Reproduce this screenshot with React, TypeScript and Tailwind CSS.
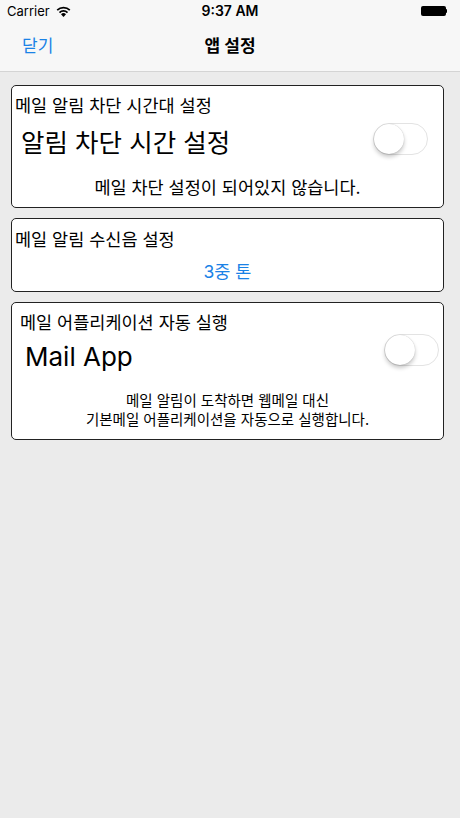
import React from 'react'

const font = { fontFamily: 'Inter, "Noto Sans CJK KR", sans-serif' }

function Toggle() {
  return (
    <div className="relative h-[32px] w-[55px] rounded-full border border-[#e3e3e3] bg-white">
      <div className="absolute left-0 top-0 h-[30px] w-[30px] rounded-full bg-white shadow-[0_3px_4px_rgba(0,0,0,0.22),0_0_1px_rgba(0,0,0,0.25)]" />
    </div>
  )
}

function Wifi() {
  return (
    <svg width="15" height="11" viewBox="0 0 15 11" className="ml-[6px]">
      <path d="M7.5 11 L5 8.2 A3.6 3.6 0 0 1 10 8.2 Z" fill="#000" />
      <path d="M2.9 5.9 A6.6 6.6 0 0 1 12.1 5.9 L10.9 7.2 A4.9 4.9 0 0 0 4.1 7.2 Z" fill="#000" />
      <path d="M0.6 3.5 A9.8 9.8 0 0 1 14.4 3.5 L13.2 4.8 A8.1 8.1 0 0 0 1.8 4.8 Z" fill="#000" />
    </svg>
  )
}

export default function App() {
  return (
    <div className="min-h-[818px] w-[460px] bg-[#ebebeb] text-black" style={font}>
      {/* status + nav */}
      <div className="border-b border-[#d4d4d4] bg-[#f7f7f7]">
        <div className="relative flex h-[22px] items-center px-[7px] text-[13px] leading-none">
          <span>Carrier</span>
          <Wifi />
          <span className="absolute left-1/2 -translate-x-1/2 text-[14px] font-semibold">9:37 AM</span>
          <div className="ml-auto mr-[6px] flex items-center">
            <div className="h-[10px] w-[25px] rounded-[2px] bg-black" />
            <div className="h-[4px] w-[1.5px] rounded-r bg-black" />
          </div>
        </div>
        <div className="relative flex h-[49px] items-center">
          <span className="ml-[22px] text-[17px] text-[#1a82e6]">닫기</span>
          <span className="absolute left-1/2 -translate-x-1/2 text-[17px] font-semibold">앱 설정</span>
        </div>
      </div>

      <div className="flex flex-col gap-[10px] pl-[11px] pr-[16px] pt-[13px]">
        <div className="h-[123px] rounded-[5px] border border-[#222] bg-white">
          <div className="pl-[3px] pt-[9px] text-[17.5px] leading-[22px]">메일 알림 차단 시간대 설정</div>
          <div className="mt-[5px] flex items-start pl-[9px] pr-[15px]">
            <span className="mt-[4px] text-[25.5px] leading-[34px]">알림 차단 시간 설정</span>
            <div className="ml-auto mt-[1px]">
              <Toggle />
            </div>
          </div>
          <div className="mt-[17px] text-center text-[17.5px] leading-[22px]">메일 차단 설정이 되어있지 않습니다.</div>
        </div>

        <div className="h-[74px] rounded-[5px] border border-[#222] bg-white">
          <div className="pl-[3px] pt-[10px] text-[17.5px] leading-[22px]">메일 알림 수신음 설정</div>
          <div className="mt-[10px] text-center text-[17.5px] leading-[22px] text-[#1a82e6]">3중 톤</div>
        </div>

        <div className="h-[138px] rounded-[5px] border border-[#222] bg-white">
          <div className="pl-[8px] pt-[9px] text-[17.5px] leading-[22px]">메일 어플리케이션 자동 실행</div>
          <div className="flex items-start pl-[13px] pr-[4px]">
            <span className="mt-[6px] text-[26px] leading-[34px]">Mail App</span>
            <div className="ml-auto">
              <Toggle />
            </div>
          </div>
          <div className="mt-[17px] text-center text-[14.5px] leading-[19px]">
            메일 알림이 도착하면 웹메일 대신
            <br />
            기본메일 어플리케이션을 자동으로 실행합니다.
          </div>
        </div>
      </div>
    </div>
  )
}
